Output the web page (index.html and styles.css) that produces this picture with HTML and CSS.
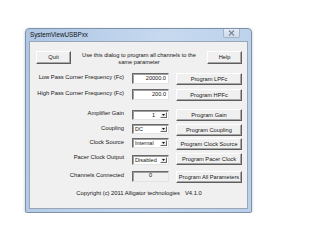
FILE: index.html
```html
<!DOCTYPE html>
<html>
<head>
<meta charset="utf-8">
<link rel="stylesheet" href="styles.css">
</head>
<body>
<div class="window">
  <div class="titlebar">
    <span class="title">SystemViewUSBPxx</span>
    <span class="close"><svg width="7" height="6" viewBox="0 0 7 6"><path d="M1 0.5 L6 5.5 M6 0.5 L1 5.5" stroke="#7a8593" stroke-width="1.2" fill="none"/></svg></span>
  </div>
  <div class="client">
    <div class="top">
      <div class="btn">Quit</div>
      <p class="intro">Use this dialog to program all channels to the<br>same parameter</p>
      <div class="btn">Help</div>
    </div>
    <div class="form">
      <span class="label">Low Pass Corner Frequency (Fc)</span>
      <div class="field num">20000.0</div>
      <div class="btn">Program LPFc</div>

      <span class="label">High Pass Corner Frequency (Fc)</span>
      <div class="field num">200.0</div>
      <div class="btn">Program HPFc</div>

      <span class="label">Amplifier Gain</span>
      <div class="field select gain"><span class="val">1</span><span class="arrow"><svg width="3" height="2" viewBox="0 0 3 2"><path d="M0 0 H3 L1.5 2 Z" fill="#111"/></svg></span></div>
      <div class="btn">Program Gain</div>

      <span class="label">Coupling</span>
      <div class="field select"><span class="val">DC</span><span class="arrow"><svg width="3" height="2" viewBox="0 0 3 2"><path d="M0 0 H3 L1.5 2 Z" fill="#111"/></svg></span></div>
      <div class="btn">Program Coupling</div>

      <span class="label">Clock Source</span>
      <div class="field select"><span class="val">Internal</span><span class="arrow"><svg width="3" height="2" viewBox="0 0 3 2"><path d="M0 0 H3 L1.5 2 Z" fill="#111"/></svg></span></div>
      <div class="btn">Program Clock Source</div>

      <span class="label">Pacer Clock Output</span>
      <div class="field select low"><span class="val">Disabled</span><span class="arrow"><svg width="3" height="2" viewBox="0 0 3 2"><path d="M0 0 H3 L1.5 2 Z" fill="#111"/></svg></span></div>
      <div class="btn">Program Pacer Clock</div>

      <span class="label">Channels Connected</span>
      <div class="field readonly">0</div>
      <div class="btn">Program All Parameters</div>
    </div>
    <p class="copy">Copyright (c) 2011 Alligator technologies<span class="ver">V4.1.0</span></p>
  </div>
</div>
</body>
</html>
```
FILE: styles.css
```css
html, body {
  margin: 0;
  padding: 0;
  background: #ffffff;
}
body {
  padding: 28px 0 0 25px;
  font-family: "Liberation Sans", Arial, sans-serif;
  color: #161616;
}
.window {
  box-sizing: border-box;
  width: 227px;
  height: 185px;
  border: 1px solid #8192a8;
  border-radius: 4px 4px 2px 2px;
  background: linear-gradient(100deg, #aec7e5 0%, #c6d9ef 55%, #b9cfea 100%);
  padding: 0 3px 3px 3px;
  box-shadow: 0 1px 3px rgba(60, 80, 110, 0.35);
  display: flex;
  flex-direction: column;
}
.titlebar {
  height: 12px;
  display: flex;
  align-items: flex-start;
  justify-content: space-between;
  flex: none;
}
.title {
  font-size: 6.3px;
  line-height: 12px;
  color: #111111;
  padding-left: 1px;
}
.close {
  width: 17px;
  height: 9px;
  box-sizing: border-box;
  margin-right: 8px;
  border: 1px solid #a4b3c6;
  border-top: none;
  border-radius: 0 0 2px 2px;
  background: linear-gradient(#e2ebf6, #cddced);
  display: flex;
  align-items: center;
  justify-content: center;
}
.close svg { display: block; }
.client {
  flex: 1;
  box-sizing: border-box;
  border: 1px solid #98a6b8;
  background: #f0f0f0;
  padding: 9px 5px 0 6px;
}
.top {
  display: grid;
  grid-template-columns: 35px 1fr 35px;
  align-items: start;
  height: 13px;
}
.top .btn {
  height: 13px;
}
.intro {
  margin: 0;
  font-size: 5.7px;
  line-height: 7px;
  text-align: center;
  padding-top: 0.5px;
}
.btn {
  box-sizing: border-box;
  height: 12px;
  border: 1px solid;
  border-color: #ffffff #5d5d5d #5d5d5d #ffffff;
  box-shadow: inset -1px -1px 0 #a8a8a8;
  background: #f0f0f0;
  font-size: 5.7px;
  line-height: 10px;
  text-align: center;
  white-space: nowrap;
}
.form {
  margin-top: 9px;
  display: grid;
  grid-template-columns: 89px 37px 66px;
  column-gap: 7px;
  grid-template-rows: 16px 20px 15px 14px 15px 18px 13px;
  align-items: start;
}
.label {
  font-size: 5.8px;
  line-height: 8px;
  text-align: right;
  padding-right: 1px;
  white-space: nowrap;
}
.field {
  box-sizing: border-box;
  height: 11px;
  border: 1px solid;
  border-color: #6a6a6a #e4e4e4 #e4e4e4 #6a6a6a;
  box-shadow: inset 1px 1px 0 #a0a0a0;
  background: #ffffff;
  font-size: 5.6px;
  line-height: 9px;
  white-space: nowrap;
}
.num {
  text-align: right;
  padding-right: 2px;
}
.readonly {
  background: #f0f0f0;
  text-align: center;
  line-height: 7px;
}
.select {
  height: 10px;
  margin-top: 0;
  display: flex;
  align-items: center;
  padding-left: 2px;
  line-height: 8px;
}
.select .val {
  flex: 1;
}
.gain {
  margin-top: 1px;
}
.gain .val {
  text-align: right;
  padding-right: 5px;
}
.low {
  margin-top: 2px;
}
.arrow {
  box-sizing: border-box;
  width: 7px;
  height: 6px;
  margin-right: 1px;
  border: 1px solid;
  border-color: #ffffff #6a6a6a #6a6a6a #ffffff;
  background: #ececec;
  display: flex;
  align-items: center;
  justify-content: center;
}
.arrow svg { display: block; }
.copy {
  margin: 5px 0 0 0;
  font-size: 5.8px;
  line-height: 8px;
  text-align: center;
  white-space: nowrap;
}
.ver {
  margin-left: 5px;
}
```
